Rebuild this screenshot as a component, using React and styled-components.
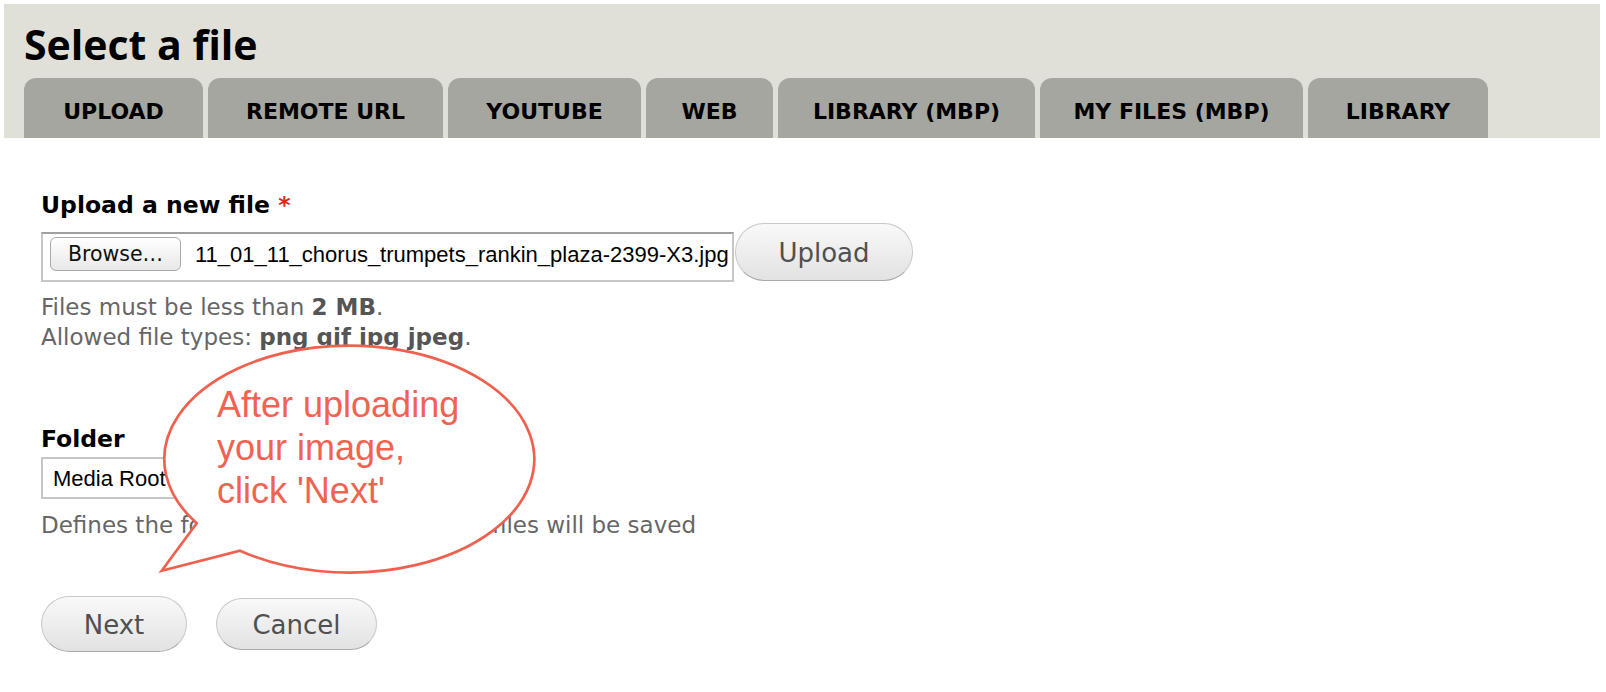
import React from 'react';
import styled, { createGlobalStyle } from 'styled-components';

const GlobalStyle = createGlobalStyle`
  html, body {
    margin: 0;
    padding: 0;
    background: #fff;
  }
  body {
    font-family: "DejaVu Sans", Verdana, sans-serif;
  }
`;

const Page = styled.div`
  position: relative;
  width: 1606px;
  height: 692px;
  overflow: hidden;
`;

const Header = styled.header`
  margin: 4px 6px 0 4px;
  padding: 15px 0 0 20px;
  background: #e0e0d8;
`;

const Title = styled.h1`
  margin: 0 0 9px;
  font-family: "Open Sans", sans-serif;
  font-weight: 700;
  font-size: 41px;
  line-height: 50px;
  color: #000;
`;

const Tabs = styled.nav`
  display: flex;
  gap: 5px;
`;

const Tab = styled.div`
  box-sizing: border-box;
  width: ${props => props.$w}px;
  height: 60px;
  padding-top: 7px;
  line-height: 53px;
  text-align: center;
  white-space: nowrap;
  background: #a6a6a1;
  border-radius: 12px 12px 0 0;
  font-family: "DejaVu Sans", sans-serif;
  font-weight: 700;
  font-size: 22px;
  color: #000;
`;

const Form = styled.main`
  padding: 53px 0 0 41px;
`;

const Field = styled.div`
  margin-top: ${props => props.$top || 0}px;
`;

const FieldLabel = styled.label`
  display: block;
  margin-bottom: 4px;
  font-family: "DejaVu Sans", sans-serif;
  font-weight: 700;
  font-size: 23.5px;
  line-height: 28px;
  color: #000;
`;

const Required = styled.span`
  color: #e3241b;
`;

const UploadRow = styled.div`
  display: flex;
  align-items: flex-end;
`;

const FileBox = styled.div`
  box-sizing: border-box;
  width: 693px;
  height: 50px;
  display: flex;
  align-items: flex-start;
  gap: 14px;
  padding: 3px 0 0 7px;
  background: #fff;
  border: 2px solid #c6c6c6;
  border-top-color: #9f9f9f;
`;

const BrowseButton = styled.button`
  box-sizing: border-box;
  flex-shrink: 0;
  width: 131px;
  height: 34px;
  padding: 0;
  border: 1px solid #a9a9a9;
  border-radius: 6px;
  background: linear-gradient(#ffffff, #e8e8e8);
  font-family: "DejaVu Sans", sans-serif;
  font-size: 20.5px;
  line-height: 32px;
  color: #111;
`;

const FileName = styled.span`
  font-family: "Liberation Sans", Arial, sans-serif;
  font-size: 22px;
  line-height: 36px;
  color: #000;
  white-space: nowrap;
`;

const PillButton = styled.button`
  box-sizing: border-box;
  width: ${props => props.$w}px;
  height: ${props => props.$h}px;
  margin: ${props => props.$m || '0'};
  display: flex;
  align-items: center;
  justify-content: center;
  padding: 2px 0 0;
  border: 1px solid #c8c8c8;
  border-bottom-color: #a9a9a9;
  border-radius: 999px;
  background: linear-gradient(#f9f9f9, #e2e2e2);
  font-family: "DejaVu Sans", sans-serif;
  font-size: 26px;
  color: #505050;
`;

const Help = styled.div`
  margin-top: ${props => props.$top}px;
  font-family: "DejaVu Sans", sans-serif;
  font-size: 23px;
  line-height: 30px;
  color: #666;
  white-space: nowrap;

  b {
    color: #555;
    font-weight: 700;
  }
`;

const SelectBox = styled.div`
  box-sizing: border-box;
  width: 300px;
  height: 42px;
  padding: 1px 0 0 10px;
  border: 2px solid #c6c6c6;
  background: #fff;
  font-family: "Liberation Sans", Arial, sans-serif;
  font-size: 22px;
  line-height: 37px;
  color: #000;
`;

const Actions = styled.div`
  display: flex;
  align-items: center;
  gap: 29px;
  margin-top: 56px;
`;

const Bubble = styled.div`
  position: absolute;
  left: 150px;
  top: 335px;
  width: 400px;
  height: 250px;
`;

const BubbleShape = styled.svg`
  position: absolute;
  inset: 0;
  overflow: visible;
`;

const BubbleText = styled.p`
  position: absolute;
  left: 67px;
  top: 48px;
  margin: 0;
  font-family: "Liberation Sans", Arial, sans-serif;
  font-size: 36px;
  line-height: 43px;
  color: #f26251;
  white-space: nowrap;
`;

const tabs = [
  { label: 'UPLOAD', w: 179 },
  { label: 'REMOTE URL', w: 235 },
  { label: 'YOUTUBE', w: 193 },
  { label: 'WEB', w: 127 },
  { label: 'LIBRARY (MBP)', w: 257 },
  { label: 'MY FILES (MBP)', w: 263 },
  { label: 'LIBRARY', w: 180 },
];

export default function App() {
  return (
    <Page>
      <GlobalStyle />
      <Header>
        <Title>Select a file</Title>
        <Tabs>
          {tabs.map(t => (
            <Tab key={t.label} $w={t.w}>{t.label}</Tab>
          ))}
        </Tabs>
      </Header>

      <Form>
        <Field>
          <FieldLabel>Upload a new file <Required>*</Required></FieldLabel>
          <UploadRow>
            <FileBox>
              <BrowseButton type="button">Browse…</BrowseButton>
              <FileName>11_01_11_chorus_trumpets_rankin_plaza-2399-X3.jpg</FileName>
            </FileBox>
            <PillButton type="button" $w={178} $h={58} $m="0 0 1px 1px">Upload</PillButton>
          </UploadRow>
          <Help $top={10}>
            Files must be less than <b>2 MB</b>.<br />
            Allowed file types: <b>png gif jpg jpeg</b>.
          </Help>
        </Field>

        <Field $top={73}>
          <FieldLabel>Folder</FieldLabel>
          <SelectBox>Media Root</SelectBox>
          <Help $top={11}>Defines the folder where the uploaded files will be saved</Help>
        </Field>

        <Actions>
          <PillButton type="button" $w={146} $h={56}>Next</PillButton>
          <PillButton type="button" $w={161} $h={52}>Cancel</PillButton>
        </Actions>
      </Form>

      <Bubble>
        <BubbleShape width="400" height="250" viewBox="0 0 400 250">
          <path
            d="M 46.7 188.3 L 11.7 235.7 L 90 215.7 A 185 113.5 0 1 0 46.7 188.3 Z"
            fill="#fff"
            stroke="#f0604f"
            strokeWidth="2.7"
            strokeLinejoin="miter"
          />
        </BubbleShape>
        <BubbleText>
          After uploading<br />
          your image,<br />
          click 'Next'
        </BubbleText>
      </Bubble>
    </Page>
  );
}
